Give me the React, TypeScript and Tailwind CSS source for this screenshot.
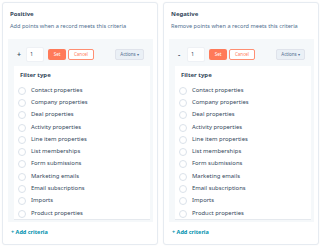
const filterTypes = [
  "Contact properties",
  "Company properties",
  "Deal properties",
  "Activity properties",
  "Line item properties",
  "List memberships",
  "Form submissions",
  "Marketing emails",
  "Email subscriptions",
  "Imports",
  "Product properties",
];

interface CriteriaCardProps {
  title: string;
  description: string;
  sign: string;
}

function CriteriaCard({ title, description, sign }: CriteriaCardProps) {
  return (
    <div className="w-[156px] h-[243px] border border-[#e6ebf1] rounded-[3px] bg-white pl-[5px] pt-[7px] shadow-[0_0_2px_rgba(0,0,0,0.04)]">
      <p className="h-[8px] leading-[8px] text-[6px] font-bold text-[#33475b] pl-[2px]">
        {title}
      </p>
      <p className="mt-[4px] h-[8px] leading-[8px] text-[5.6px] text-[#516f90] pl-[2px]">
        {description}
      </p>
      <div className="mt-[9px] w-[145px] h-[183px] bg-[#f5f8fa] pt-[8px] pl-[9px] pr-[9px] pb-[2px] flex flex-col">
        <div className="flex items-center h-[15px]">
          <span className="w-[9px] text-[7px] font-semibold text-[#33475b] leading-none">
            {sign}
          </span>
          <div className="w-[18px] h-[15px] bg-white border border-[#eef1f5] rounded-[2px] flex items-center pl-[3px] text-[5.5px] text-[#33475b]">
            1
          </div>
          <button className="ml-[4px] w-[18px] h-[11px] rounded-[2px] bg-[#ff7a59] text-white text-[4.5px] flex items-center justify-center">
            Set
          </button>
          <button className="ml-[2px] w-[26px] h-[11px] rounded-[2px] border border-[#ff8f73] bg-white text-[#ff7a59] text-[4.5px] flex items-center justify-center">
            Cancel
          </button>
          <button className="ml-auto w-[29px] h-[11px] rounded-[2px] border border-[#dfe3eb] bg-[#eaf0f6] text-[#516f90] text-[4.5px] flex items-center justify-center gap-[1px]">
            Actions <span className="text-[3.5px]">▾</span>
          </button>
        </div>
        <div className="mt-[4px] -ml-[3px] mr-[-6px] h-[154px] bg-white overflow-hidden pl-[4px] pt-[4.5px] border-b border-[#e5e9ee]">
          <p className="h-[9px] leading-[9px] text-[6px] font-bold text-[#33475b] pl-[2px]">
            Filter type
          </p>
          <ul className="mt-[5px]">
            {filterTypes.map((t) => (
              <li key={t} className="h-[12.3px] flex items-center">
                <span className="w-[8px] h-[8px] rounded-full border border-[#dbe2ea] bg-white shrink-0" />
                <span className="ml-[5px] text-[5.9px] text-[#33475b] leading-none">
                  {t}
                </span>
              </li>
            ))}
          </ul>
        </div>
      </div>
      <p className="mt-[6px] h-[9px] leading-[9px] text-[5.5px] font-bold text-[#0091ae] pl-[3px]">
        + Add criteria
      </p>
    </div>
  );
}

export default function App() {
  return (
    <div
      className="w-[323px] h-[249px] bg-white flex gap-[5px] pl-[2px] pt-[2px]"
      style={{ fontFamily: "'Noto Sans', sans-serif" }}
    >
      <CriteriaCard
        title="Positive"
        description="Add points when a record meets this criteria"
        sign="+"
      />
      <CriteriaCard
        title="Negative"
        description="Remove points when a record meets this criteria"
        sign="-"
      />
    </div>
  );
}
